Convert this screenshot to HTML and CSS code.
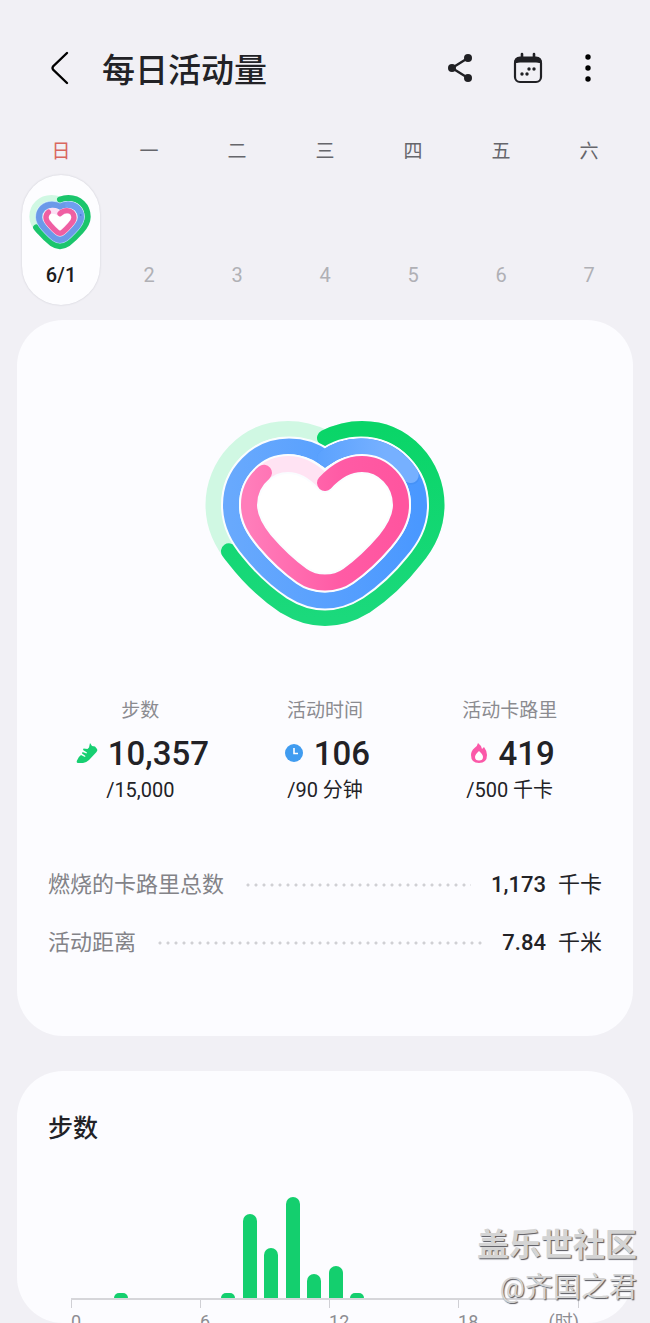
FILE: index.html
```html
<!DOCTYPE html>
<html lang="zh-CN">
<head>
    <meta charset="UTF-8">
    <meta name="viewport" content="width=device-width, initial-scale=1.0">
    <title>每日活动量</title>
    <link rel="stylesheet" href="styles.css">
</head>
<body>
    <div class="app">
        <header class="header">
            <button class="icon-btn back" aria-label="返回">
                <svg width="22" height="36" viewBox="0 0 22 36"><path d="M18 3L4 16.500Q3 18 4 19.500L18 33" fill="none" stroke="#000" stroke-width="2.400" stroke-linecap="round"/></svg>
            </button>
            <h1 class="title">每日活动量</h1>
            <button class="icon-btn share" aria-label="分享">
                <svg width="28" height="30" viewBox="0 0 28 30">
                    <path d="M22 5L6 15L22 25" fill="none" stroke="#202024" stroke-width="2.400"/>
                    <circle cx="22" cy="5" r="4" fill="#202024"/><circle cx="6" cy="15" r="4" fill="#202024"/><circle cx="22" cy="25" r="4" fill="#202024"/>
                </svg>
            </button>
            <button class="icon-btn calendar" aria-label="日历">
                <svg width="30" height="32" viewBox="0 0 30 32">
                    <rect x="2" y="6" width="26" height="24" rx="5" fill="none" stroke="#202024" stroke-width="2.200"/>
                    <path d="M1 11Q1 4.500 7 4.500H23Q29 4.500 29 11H26Q25.500 10.500 23 10.500H7Q4.500 10.500 4 11Z" fill="#202024"/>
                    <path d="M9 2V6M21 2V6" stroke="#202024" stroke-width="2.600" stroke-linecap="round"/>
                    <g fill="#202024"><circle cx="16" cy="17" r="1.700"/><circle cx="21" cy="17" r="1.700"/><circle cx="9" cy="22" r="1.700"/><circle cx="14" cy="22" r="1.700"/></g>
                </svg>
            </button>
            <button class="icon-btn more" aria-label="更多">
                <svg width="8" height="30" viewBox="0 0 8 30"><circle cx="4" cy="4" r="2.700"/><circle cx="4" cy="15" r="2.700"/><circle cx="4" cy="26" r="2.700"/></svg>
            </button>
        </header>

        <div class="week weekdays">
            <span class="sunday">日</span><span>一</span><span>二</span><span>三</span><span>四</span><span>五</span><span>六</span>
        </div>
        <div class="week days">
            <button class="day selected">
                <svg class="day-heart" viewBox="0 0 204 192" aria-hidden="true">
                    <defs>
                        <path id="dayOuter" pathLength="100" d="M99 29C107 26 115 24 124 24C158 24 182 48 182 80C182 98 172 112 160 125C148 139 136 150 122 161C108 171 90 171 76 161C62 150 50 139 38 125C26 112 16 98 16 80C16 48 40 24 74 24C83 24 91 26 99 29"/>
                        <path id="dayMiddle" d="M99 50C107 46 114 44 123 44C146 44 162 60 162 82C162 94 155 104 146 114C136 125 126 136 115 144C105 151 93 151 83 144C72 136 62 125 52 114C43 104 36 94 36 82C36 60 52 44 75 44C84 44 91 46 99 50Z"/>
                        <path id="dayInner" pathLength="100" d="M99 71C105 65 112 62 120 62C133 62 141 71 141 83C141 92 135 98 129 105C122 113 115 120 108 126C102 131 96 131 90 126C83 120 76 113 69 105C63 98 57 92 57 83C57 71 65 62 78 62C86 62 93 65 99 71"/>
                    </defs>
                    <g fill="none" stroke-width="18" stroke-linecap="round">
                        <use href="#dayOuter" stroke="#d0f8e3"/>
                        <use href="#dayOuter" stroke="#1bc56c" stroke-dasharray="69 100"/>
                        <use href="#dayMiddle" fill="#fff" stroke="#a9d8f4" stroke-width="22"/>
                        <use href="#dayMiddle" stroke="#6b99e9"/>
                        <path d="M123 44C143 44 156 56 160 70" stroke="#6f9ff0"/>
                        <circle cx="161" cy="75" r="3" fill="#4b7fd6"/>
                        <use href="#dayInner" stroke="#fbe0f4"/>
                        <use href="#dayInner" stroke="#ef5fa2" stroke-width="16" stroke-dasharray="84 100"/>
                    </g>
                </svg>
                <span>6/1</span>
            </button>
            <button class="day">2</button>
            <button class="day">3</button>
            <button class="day">4</button>
            <button class="day">5</button>
            <button class="day">6</button>
            <button class="day">7</button>
        </div>

        <main class="cards">
            <section class="card summary">
                <svg class="big-heart" viewBox="0 0 260 235" role="img" aria-label="活动量">
                    <defs>
                        <linearGradient id="greenFill" x1="0" y1="0" x2="0" y2="1">
                            <stop offset="0" stop-color="#0ad568"/>
                            <stop offset="1" stop-color="#1bd97c"/>
                        </linearGradient>
                        <linearGradient id="blueFill" gradientUnits="userSpaceOnUse" x1="36" y1="0" x2="224" y2="0">
                            <stop offset="0" stop-color="#68a9fd"/>
                            <stop offset="1" stop-color="#4a98ff"/>
                        </linearGradient>
                        <linearGradient id="blueLap" gradientUnits="userSpaceOnUse" x1="122" y1="0" x2="190" y2="0">
                            <stop offset="0" stop-color="#5ba2fe"/>
                            <stop offset="1" stop-color="#76b0ff"/>
                        </linearGradient>
                        <linearGradient id="pinkFill" x1="0" y1="0" x2="1" y2="0">
                            <stop offset="0" stop-color="#ff7dba"/>
                            <stop offset="0.6" stop-color="#ff5ba5"/>
                            <stop offset="1" stop-color="#ff559f"/>
                        </linearGradient>
                        <path id="outerHeart" pathLength="100" d="M130 33C142 27 153 24 167 24C210 24 241.500 60 241.500 100C241.500 122 232 140 220 154C206 172 188 189 170 201C157 209 144 213 130 213C116 213 103 209 90 201C72 189 54 172 40 154C28 140 18.500 122 18.500 100C18.500 60 50 24 93 24C107 24 118 27 130 33"/>
                        <path id="middleHeart" pathLength="100" d="M130 53C141 45 152 41.500 166 41.500C198 41.500 224 68 224 100C224 120 215 134 205 146C193 161 178 175 163 185C152 192 142 195.500 130 195.500C118 195.500 108 192 97 185C82 175 67 161 55 146C45 134 36 120 36 100C36 68 62 41.500 94 41.500C108 41.500 119 45 130 53Z"/>
                        <path id="innerHeart" pathLength="100" d="M130 78C141 66 152 59 167 59C188 59 206 77 206 100C206 114 199 125 190 136C178 150 165 162 153 170.500C146 175.500 138 177.500 130 177.500C122 177.500 114 175.500 107 170.500C95 162 82 150 70 136C61 125 54 114 54 100C54 77 72 59 93 59C108 59 119 66 130 78"/>
                    </defs>
                    <g fill="none" stroke-width="16" stroke-linecap="round">
                        <use href="#outerHeart" stroke="#d0f8e3"/>
                        <use href="#outerHeart" stroke="url(#greenFill)" stroke-dasharray="68.500 100"/>
                        <use href="#middleHeart" fill="#fff" stroke="#fafdff" stroke-width="20"/>
                        <use href="#middleHeart" stroke="url(#blueFill)"/>
                        <use href="#middleHeart" stroke="#3c87ec" stroke-opacity="0.4" stroke-dasharray="18.300 100"/>
                        <use href="#middleHeart" stroke="url(#blueLap)" stroke-dasharray="18 100"/>
                        <use href="#innerHeart" stroke="#fafdff" stroke-width="20"/>
                        <use href="#innerHeart" stroke="#ffe3f3"/>
                        <use href="#innerHeart" stroke="url(#pinkFill)" stroke-dasharray="84.400 100"/>
                    </g>
                </svg>

                <div class="stats">
                    <div class="stat">
                        <div class="stat-label">步数</div>
                        <div class="stat-value">
                            <svg width="22" height="22" viewBox="0 0 22 22"><path d="M14 1L16 4L19 4.500L21 7Q22 8 20.500 10L13 18Q10.500 20.500 7 21H2Q0 20.500 1 18.500Q2 15 5 13L9 15L9.500 14L6 11.500L6.500 10L10.500 11.500L11 10.500L7 8L7.500 6.500L11.500 7L13 5.500Z" fill="#17cf72"/></svg>
                            <strong>10,357</strong>
                        </div>
                        <div class="stat-goal">/15,000</div>
                    </div>
                    <div class="stat">
                        <div class="stat-label">活动时间</div>
                        <div class="stat-value">
                            <svg width="20" height="20" viewBox="0 0 20 20"><circle cx="10" cy="10" r="9" fill="#409cf0"/><path d="M10 5V10.500H14" fill="none" stroke="#fff" stroke-width="1.600"/></svg>
                            <strong>106</strong>
                        </div>
                        <div class="stat-goal">/90 分钟</div>
                    </div>
                    <div class="stat">
                        <div class="stat-label">活动卡路里</div>
                        <div class="stat-value">
                            <svg width="20" height="22" viewBox="0 0 20 22"><path d="M9 1Q12 3 13 7L15 5Q18 9 18 13Q18 21 10 21Q2 21 2 13Q2 9 5.500 6Q8.500 4 9 1Z" fill="#fb59a9"/><path d="M10 9Q14 12.500 14 15Q14 18.500 10 18.500Q6 18.500 6 15Q6 12.500 10 9Z" fill="#fff"/></svg>
                            <strong>419</strong>
                        </div>
                        <div class="stat-goal">/500 千卡</div>
                    </div>
                </div>

                <div class="detail">
                    <span class="detail-name">燃烧的卡路里总数</span><span class="leader"></span><strong>1,173</strong><span>千卡</span>
                </div>
                <div class="detail">
                    <span class="detail-name">活动距离</span><span class="leader"></span><strong>7.84</strong><span>千米</span>
                </div>
            </section>

            <section class="card steps">
                <h2>步数</h2>
                <div class="chart">
                    <div class="bars" id="bars"></div>
                    <div class="axis">
                        <span>0</span><span>6</span><span>12</span><span class="last"><span>18</span><span>(时)</span></span>
                    </div>
                </div>
            </section>
        </main>

        <div class="watermark">
            <div class="watermark-site">盖乐世社区</div>
            <div class="watermark-user">@齐国之君</div>
        </div>
    </div>

    <script src="script.js"></script>
</body>
</html>
```
FILE: styles.css
```css
* {
    box-sizing: border-box;
}
body {
    margin: 0;
    background-color: #f1f0f5;
    color: #222226;
    font-family: Roboto, "Noto Sans CJK SC", sans-serif;
}
button {
    padding: 0;
    border: none;
    background: none;
    font: inherit;
    color: inherit;
    cursor: pointer;
}
.app {
    position: relative;
    display: flex;
    flex-direction: column;
    height: 100vh;
    overflow: hidden;
}

/* header */
.header {
    display: flex;
    align-items: center;
    height: 136px;
    padding: 0 40px;
    flex-shrink: 0;
}
.icon-btn {
    display: flex;
    align-items: center;
    justify-content: center;
    width: 40px;
    height: 48px;
}
.title {
    flex: 1;
    margin: 6px 0 0 22px;
    font-size: 33px;
    line-height: 48px;
    font-weight: 500;
}
.calendar {
    margin-left: 28px;
}
.more {
    margin: 0 2px 0 20px;
}

/* week strip */
.week {
    display: grid;
    grid-template-columns: repeat(7, 1fr);
    padding: 0 17px;
    flex-shrink: 0;
    text-align: center;
}
.weekdays {
    padding-top: 2px;
    font-size: 19px;
    line-height: 28px;
    color: #66666b;
}
.sunday {
    color: #d9675f;
}
.days {
    margin-top: 9px;
}
.day {
    display: flex;
    flex-direction: column;
    align-items: center;
    justify-content: flex-end;
    justify-self: center;
    width: 78px;
    height: 130px;
    padding-bottom: 17px;
    border-radius: 39px;
    font-size: 20px;
    line-height: 26px;
    color: #b0b0b5;
}
.selected {
    background-color: #fdfdff;
    box-shadow: 0 0 2px #c8c8d0;
    color: #1c1c20;
    font-weight: 500;
}
.day-heart {
    width: 68px;
    margin-bottom: 8px;
}

/* cards */
.cards {
    display: flex;
    flex-direction: column;
    flex: 1;
    gap: 35px;
    min-height: 0;
    padding: 15px 17px 0;
}
.card {
    padding: 0 31px;
    border-radius: 46px;
    background-color: #fcfcff;
}
.summary {
    flex-shrink: 0;
    padding-top: 85px;
    padding-bottom: 64px;
}
.big-heart {
    display: block;
    width: 260px;
    margin: 0 auto;
}
.stats {
    display: grid;
    grid-template-columns: repeat(3, 1fr);
    margin: 56px 0;
    text-align: center;
}
.stat-label {
    font-size: 19px;
    line-height: 30px;
    color: #8b8b90;
}
.stat-value {
    display: flex;
    align-items: center;
    justify-content: center;
    gap: 10px;
    height: 54px;
    padding-left: 4px;
    font-size: 33px;
}
.stat-value strong {
    font-weight: 500;
}
.stat-goal {
    font-size: 20px;
    line-height: 20px;
}
.detail {
    display: flex;
    align-items: center;
    font-size: 22px;
    line-height: 58px;
}
.detail-name {
    color: #838388;
}
.leader {
    flex: 1;
    height: 4px;
    margin: 0 20px;
    background: radial-gradient(circle, #d0d0d4 1px, transparent 2px) 0 0 / 8px 4px repeat-x;
}
.detail strong {
    margin-right: 12px;
    font-weight: 500;
}

/* hourly chart */
.steps {
    flex: 1;
    min-height: 0;
    overflow: hidden;
}
.steps h2 {
    margin: 40px 0 0;
    font-size: 25px;
    line-height: 36px;
    font-weight: 500;
}
.chart {
    margin: 50px 23px 0;
}
.bars {
    display: flex;
    align-items: flex-end;
    justify-content: space-between;
    height: 103px;
    border-bottom: 2px solid #d6d6da;
}
.bar {
    width: 14px;
    border-radius: 7px 7px 0 0;
    background-color: #14cf6e;
}
.axis {
    display: grid;
    grid-template-columns: 25.4% 25.4% 25.4% 1fr;
    font-size: 18px;
    line-height: 26px;
    color: #8d8d92;
}
.axis > span {
    padding-top: 9px;
    background: linear-gradient(#d0d0d5, #d0d0d5) 0 0 / 1px 8px no-repeat;
}
.axis .last {
    display: flex;
    justify-content: space-between;
    background: linear-gradient(#d0d0d5, #d0d0d5) 0 0 / 1px 8px no-repeat, linear-gradient(#d0d0d5, #d0d0d5) 100% 0 / 1px 8px no-repeat;
}

.watermark {
    position: absolute;
    right: 13px;
    bottom: 14px;
    text-align: right;
    color: #d4d4d4;
    text-shadow: 1px 1px 1px #55555c;
}
.watermark-site {
    font-size: 32px;
    line-height: 44px;
    font-weight: 700;
}
.watermark-user {
    font-size: 28px;
    line-height: 42px;
}
```
FILE: script.js
```js
// bar height in px for each hour of the day
var hours = [0, 0, 5, 0, 0, 0, 0, 5, 84, 50, 101, 24, 32, 5, 0, 0, 0, 0, 0, 0, 0, 0, 0, 0];
var bars = document.getElementById('bars');

hours.forEach(function (height) {
    var bar = document.createElement('div');
    bar.className = 'bar';
    bar.style.height = height + 'px';
    bars.appendChild(bar);
});
```
